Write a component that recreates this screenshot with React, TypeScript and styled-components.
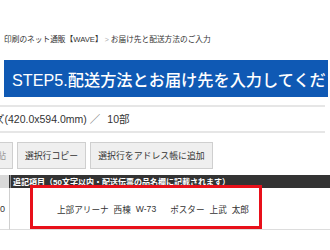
import React from 'react';
import styled, { createGlobalStyle } from 'styled-components';

const GlobalStyle = createGlobalStyle`
  html, body {
    margin: 0;
    padding: 0;
    background: #fff;
  }
  body {
    font-family: "Liberation Sans", "Noto Sans CJK JP", sans-serif;
    color: #333;
    overflow: hidden;
  }
`;

const Page = styled.div`
  position: relative;
  width: 330px;
  height: 250px;
  overflow: hidden;
  padding-top: 35px;
  box-sizing: border-box;
`;

const Breadcrumb = styled.div`
  display: flex;
  align-items: center;
  gap: 2px;
  padding-left: 4px;
  font-size: 7.7px;
  line-height: 10px;
  color: #333;
  white-space: nowrap;
`;

const Sep = styled.span`
  color: #aaa;
  font-size: 7px;
`;

const Banner = styled.div`
  margin: 15px 2px 0 4px;
  height: 37px;
  background: #0f59b4;
  display: flex;
  align-items: center;
  padding-left: 8px;
  overflow: hidden;
  white-space: nowrap;
`;

const BannerTitle = styled.h1`
  margin: 0;
  font-size: 16.2px;
  font-weight: 500;
  color: #fff;
`;

const Divider = styled.div<{ $top: number }>`
  height: 2px;
  background: #e6e6e6;
  margin-right: 5px;
  margin-top: ${(p) => p.$top}px;
`;

const SizeLine = styled.div`
  height: 22px;
  display: flex;
  align-items: center;
  overflow: hidden;
  white-space: nowrap;
  font-size: 10.5px;
  color: #333;
`;

const Clipped = styled.span`
  margin-left: -6px;
`;

const Slash = styled.span`
  margin: 0 7px 0 3px;
  color: #555;
`;

const Toolbar = styled.div`
  display: flex;
  gap: 4px;
  margin-top: 9px;
  height: 27px;
`;

const Button = styled.div<{ $w: number }>`
  flex: none;
  width: ${(p) => p.$w}px;
  display: flex;
  align-items: center;
  justify-content: center;
  height: 27px;
  box-sizing: border-box;
  background: #efefef;
  border: 1px solid #cfcfcf;
  font-size: 8.9px;
  color: #333;
  white-space: nowrap;
  overflow: hidden;
`;

const CutButton = styled(Button)`
  padding-right: 6px;
  border-left: none;
  justify-content: flex-end;
  color: #999;
`;

const Table = styled.div`
  display: grid;
  grid-template-columns: 10px 1fr;
  margin-top: 6px;
`;

const HeadSide = styled.div`
  height: 13px;
  background: #d9d9d9;
  border-right: 1px solid #333;
`;

const HeadCell = styled.div`
  height: 13px;
  background: #333;
  border-left: 1px solid #8a8a8a;
  padding-left: 2px;
  display: flex;
  align-items: center;
  color: #fff;
  font-size: 8px;
  font-weight: 700;
  white-space: nowrap;
  overflow: hidden;
`;

const RowSide = styled.div`
  height: 41px;
  border-right: 1px solid #cfcfcf;
  border-bottom: 1px solid #ddd;
  display: flex;
  align-items: center;
  overflow: hidden;
  font-size: 9px;
`;

const RowCell = styled.div`
  height: 41px;
  border-bottom: 1px solid #ddd;
  display: flex;
  align-items: center;
  gap: 5px;
  padding-left: 47px;
  font-size: 8.6px;
  color: #333;
  white-space: nowrap;
`;

const Word = styled.span<{ $wide?: boolean }>`
  margin-left: ${(p) => (p.$wide ? '9px' : '0')};
`;

const Highlight = styled.div`
  position: absolute;
  left: 30px;
  top: 185px;
  width: 232px;
  height: 44px;
  box-sizing: border-box;
  border: 3px solid #e8101a;
  pointer-events: none;
`;

const words = ['上部アリーナ', '西棟', 'W-73', 'ポスター', '上武', '太郎'];

export default function App() {
  return (
    <>
      <GlobalStyle />
      <Page>
        <Breadcrumb>
          <span>印刷のネット通販【WAVE】</span>
          <Sep>&gt;</Sep>
          <span>お届け先と配送方法のご入力</span>
        </Breadcrumb>
        <Banner>
          <BannerTitle>STEP5.配送方法とお届け先を入力してください</BannerTitle>
        </Banner>
        <Divider $top={8} />
        <SizeLine>
          <Clipped>ズ(420.0x594.0mm)</Clipped>
          <Slash>／</Slash>
          <span>10部</span>
        </SizeLine>
        <Divider $top={2} />
        <Toolbar>
          <CutButton $w={13}>貼</CutButton>
          <Button $w={69}>選択行コピー</Button>
          <Button $w={123}>選択行をアドレス帳に追加</Button>
        </Toolbar>
        <Table>
          <HeadSide />
          <HeadCell>追記項目（50文字以内・配送伝票の品名欄に記載されます）</HeadCell>
          <RowSide>0</RowSide>
          <RowCell>
            {words.map((w) => (
              <Word key={w} $wide={w === 'ポスター'}>
                {w}
              </Word>
            ))}
          </RowCell>
        </Table>
        <Highlight />
      </Page>
    </>
  );
}
